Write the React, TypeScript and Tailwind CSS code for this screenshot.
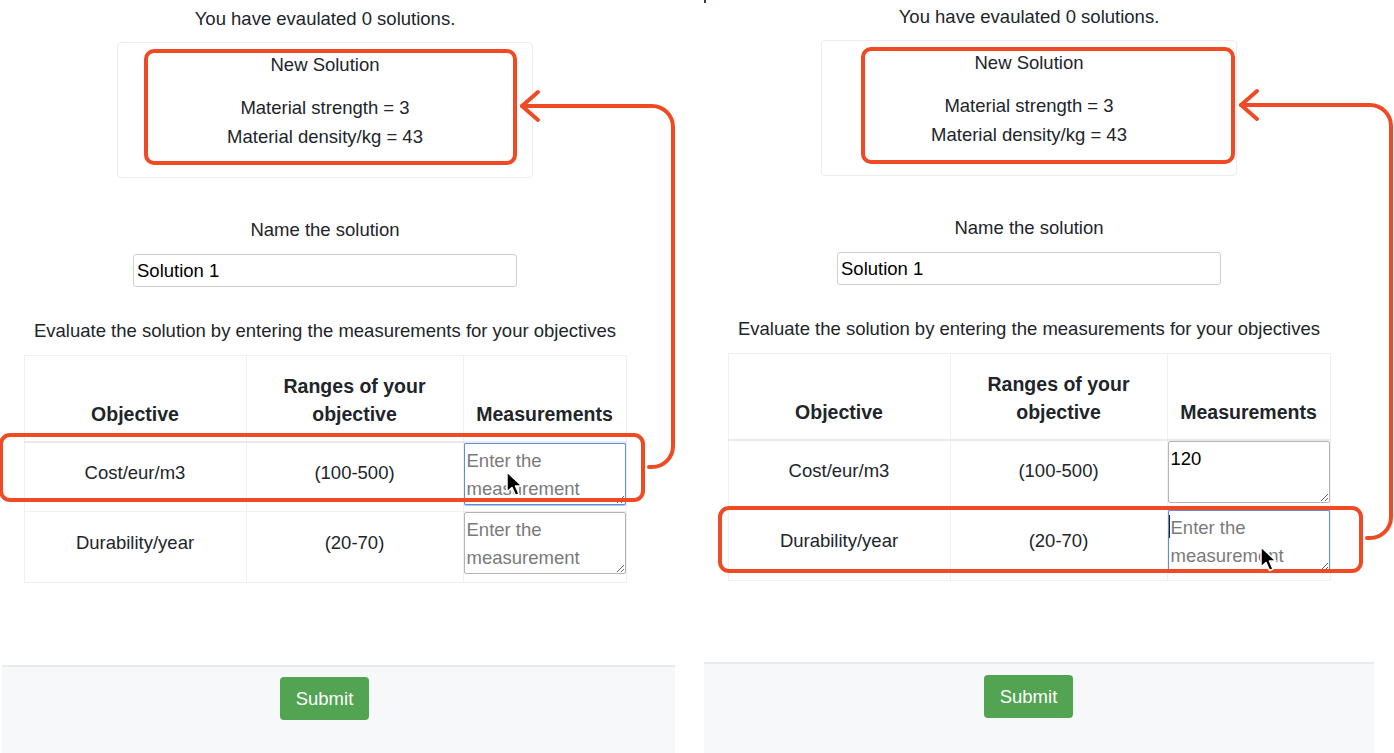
import React from "react";

const rows = [
  { name: "Cost/eur/m3", range: "(100-500)" },
  { name: "Durability/year", range: "(20-70)" },
];

function Cursor({ x, y }: { x: number; y: number }) {
  return (
    <svg
      className="absolute pointer-events-none"
      style={{ left: x - 2, top: y - 2 }}
      width="22"
      height="30"
      viewBox="0 0 22 30"
    >
      <path
        d="M2 2 L2 22 L7 17.5 L10.5 25.5 L14 24 L10.5 16 L17 16 Z"
        fill="#000"
        stroke="#fff"
        strokeWidth="1.5"
        strokeLinejoin="round"
      />
    </svg>
  );
}

function Panel({ second }: { second?: boolean }) {
  return (
    <div className={second ? "flex h-[753px] w-[670px] flex-col pt-[4px]" : "flex h-[753px] w-[675px] flex-col pt-[6px]"}>
      <div className="flex w-[650px] flex-col items-center text-center text-[18.5px] text-[#212529]">
        <p className="leading-[26px]">You have evaulated 0 solutions.</p>

        <div className="mt-[10px] h-[136px] w-[416px] rounded-[4px] border border-[#ececec] pt-[7px]">
          <p className="leading-[29px]">New Solution</p>
          <p className="mt-[14px] leading-[29px]">Material strength = 3</p>
          <p className="leading-[29px]">Material density/kg = 43</p>
        </div>

        <p className="mt-[39px] leading-[26px]">Name the solution</p>
        <input
          readOnly
          value="Solution 1"
          className="mt-[11px] h-[33px] w-[384px] rounded-[3px] border border-[#cfcfcf] px-[3px] text-[18.5px] text-black outline-none"
        />

        <p className="mt-[31px] leading-[26px]">
          Evaluate the solution by entering the measurements for your objectives
        </p>

        <table className="mt-[11px] w-[602px] table-fixed border-collapse border border-[#f0f0f0]">
          <colgroup>
            <col className="w-[222px]" />
            <col className="w-[217px]" />
            <col className="w-[163px]" />
          </colgroup>
          <thead>
            <tr className="h-[86px] border-b-2 border-[#e8eaed] text-[19.5px]">
              <th className="border-r border-[#f0f0f0] pb-[13px] align-bottom font-bold leading-[28px]">Objective</th>
              <th className="border-r border-[#f0f0f0] pb-[13px] align-bottom font-bold leading-[28px]">
                Ranges of your
                <br />
                objective
              </th>
              <th className="pb-[13px] align-bottom font-bold leading-[28px]">Measurements</th>
            </tr>
          </thead>
          <tbody>
            {rows.map((r, i) => {
              const focused = second ? i === 1 : i === 0;
              const value = second && i === 0 ? "120" : "";
              return (
                <tr key={r.name} className={i === 0 ? "h-[69px] border-b border-[#f0f0f0]" : "h-[71px]"}>
                  <td className="border-r border-[#f0f0f0] pb-[7px] align-middle leading-[28px]">{r.name}</td>
                  <td className="border-r border-[#f0f0f0] pb-[7px] align-middle leading-[28px]">{r.range}</td>
                  <td className="p-0 pb-[6px] align-top">
                    <textarea
                      readOnly
                      value={value}
                      placeholder="Enter the measurement"
                      className={
                        focused
                          ? "block h-[62px] w-full rounded-[2px] border border-[#5b8fdb] px-[2px] pt-[3px] text-left text-[18.5px] leading-[28px] text-black shadow-[0_0_0_0.5px_#5b8fdb] outline-none placeholder:text-[#7a7a7a]"
                          : "block h-[62px] w-full rounded-[2px] border border-[#b4b4b4] px-[2px] pt-[3px] text-left text-[18.5px] leading-[28px] text-black outline-none placeholder:text-[#7a7a7a]"
                      }
                    />
                  </td>
                </tr>
              );
            })}
          </tbody>
        </table>
      </div>

      <div
        className={
          second
            ? "mt-auto flex h-[91px] w-[670px] border-t-2 border-[#e9eaec] bg-[#f7f8fa] pl-[280px] pt-[11px]"
            : "mt-auto ml-[2px] flex h-[88px] w-[673px] border-t-2 border-[#e9eaec] bg-[#f7f8fa] pl-[278px] pt-[10px]"
        }
      >
        <button className="h-[43px] w-[89px] rounded-[4px] bg-[#52a452] text-[18.5px] text-white">Submit</button>
      </div>
    </div>
  );
}

export default function App() {
  const red = "#ef4a24";
  return (
    <div
      className="relative flex h-[753px] w-[1394px] overflow-hidden bg-white"
      style={{ fontFamily: '"Liberation Sans", Arial, sans-serif' }}
    >
      <Panel />
      <div className="ml-[29px]">
        <Panel second />
      </div>

      {/* annotations drawn over the screenshots */}
      <svg className="pointer-events-none absolute left-0 top-0" width="1394" height="753" fill="none">
        <g stroke={red} strokeWidth="4" strokeLinecap="round" strokeLinejoin="round">
          <rect x="146" y="51" width="369" height="112" rx="8" />
          <rect x="1" y="435" width="642" height="65" rx="9" />
          <path d="M649 467 H652 A21 21 0 0 0 673 446 V127 A21 21 0 0 0 652 106 H522" />
          <path d="M538 92 L522 106 L538 120" />

          <rect x="863" y="49" width="370" height="113" rx="8" />
          <rect x="720" y="508" width="641" height="63" rx="9" />
          <path d="M1367 538 H1370 A21 21 0 0 0 1391 517 V126 A21 21 0 0 0 1370 105 H1241" />
          <path d="M1257 91 L1241 105 L1257 119" />
        </g>
      </svg>

      <div className="absolute left-[1169px] top-[515px] h-[23px] w-[1px] bg-[#222]" />
      <div className="absolute left-[704px] top-0 h-[3px] w-[2px] bg-[#2c3d5e]" />

      <Cursor x={507} y={472} />
      <Cursor x={1261} y={547} />
    </div>
  );
}
